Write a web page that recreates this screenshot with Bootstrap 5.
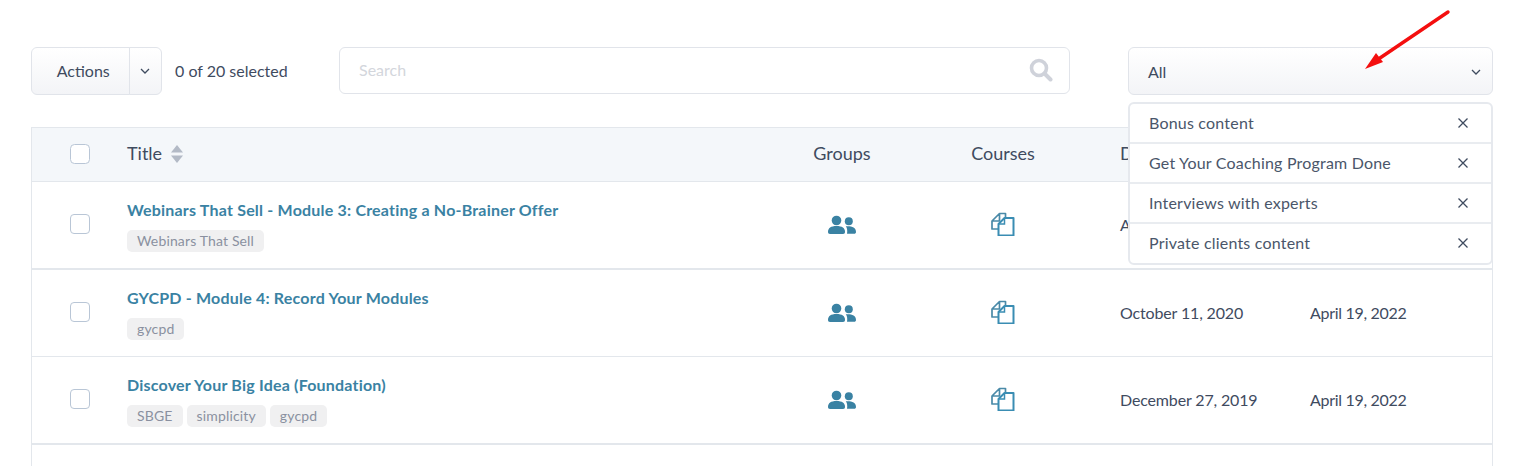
<!DOCTYPE html>
<html lang="en">
<head>
  <meta charset="UTF-8">
  <meta name="viewport" content="width=device-width, initial-scale=1">
  <title>Content list</title>
  <link href="https://cdn.jsdelivr.net/npm/bootstrap@5.3.0/dist/css/bootstrap.min.css" rel="stylesheet">
  <style>
    html, body { height: 466px; overflow: hidden; }
    body {
      font-family: "Lato", "Liberation Sans", sans-serif;
      font-size: 16px;
      color: #3f4b5f;
      background: #fff;
    }
    .page-wrap { position: relative; padding: 47px 35px 0 31px; }
    .top-bar { height: 48px; margin-bottom: 32px; }

    .actions-group { width: 131px; height: 48px; }
    .grad-btn {
      background: linear-gradient(#fff, #f3f4f7);
      border: 1px solid #e1e4ea;
      color: #3f4b5f;
      font-size: 16px;
    }
    .grad-btn:hover { background: linear-gradient(#fff, #f3f4f7); border-color: #e1e4ea; color: #3f4b5f; }
    .actions-main { width: 98px; padding: 0 0 0 6px; flex: none; }
    .actions-caret { width: 33px; padding: 0; flex: none; }
    .sel-count { margin-left: 13px; width: 164px; }

    .search-box { width: 731px; height: 47px; position: relative; flex: none; align-self: flex-start; }
    .search-input { height: 47px; border: 1px solid #e1e4ea; border-radius: 6px; padding: 0 60px 3px 19px; font-size: 16px; }
    .search-input::placeholder { color: #d3d6dc; }
    .search-icon { position: absolute; right: 17px; top: 11px; }

    .filter-select {
      width: 365px; height: 48px; margin-left: 58px; flex: none;
      padding: 2px 11px 0 19px;
      border-radius: 6px;
    }

    .item-table { width: 1462px; table-layout: fixed; margin: 0; border-collapse: separate; border-spacing: 0; border-right: 1px solid #e3e7ec; border-left: 1px solid #e3e7ec; }
    .item-table th {
      background: #f4f7fa; height: 55px; font-weight: 400; font-size: 18px; vertical-align: middle; padding: 0 0 2px;
      color: #3f4b5f; border-top: 1px solid #e3e7ec; border-bottom: 1px solid #e3e7ec;
    }
    .item-table td { height: 87px; padding: 0; vertical-align: middle; color: #3f4b5f; border-bottom: 1px solid #e3e7ec; }
    .item-table tr.thick-line td { height: 88px; border-bottom-width: 2px; }
    .item-table tr.empty-row td { height: 40px; border: 0; }
    .item-table td.title-cell { padding-top: 2px; }
    .item-table td.icon-cell { padding-bottom: 4px; }
    .item-table td.check-cell { padding-bottom: 3px; }
    .col-check { width: 95px; }
    .col-title { width: 635px; }
    .col-groups { width: 160px; }
    .col-courses { width: 162px; }
    .col-created { width: 226px; padding-left: 36px !important; letter-spacing: -.15px; }
    .updated-cell { letter-spacing: -.3px; }
    .item-check { width: 20px; height: 20px; margin: 0 0 0 38px; border: 1px solid #b9c6d6; border-radius: 5px; float: none; display: block; }
    .item-link { color: #3a82a3; font-weight: 700; letter-spacing: .2px; text-decoration: none; display: block; line-height: 20px; margin-bottom: 10px; }
    .tag-pill {
      background: #f0f0f1; color: #8a90a0; font-size: 14px; font-weight: 400; line-height: 22px; letter-spacing: .15px;
      padding: 0 10px; border-radius: 5px; height: 22px;
    }
    .sort-icon { margin-left: 3px; vertical-align: -3px; }

    .chosen-list {
      position: absolute; left: 1128px; top: 102px; width: 365px;
      border: 2px solid #e6e9ee; border-radius: 6px; background: #fff; z-index: 5;
    }
    .chosen-list .list-group-item {
      height: 40px; padding: 0 22px 0 19px; border: 0; border-bottom: 2px solid #e9ecf0; border-radius: 0;
      color: #4a566a; font-size: 16px; letter-spacing: .2px; background: transparent;
    }
    .chosen-list .list-group-item:last-child { border-bottom: 0; height: 39px; padding-bottom: 1px; }
    .red-arrow { position: absolute; left: 1360px; top: 6px; z-index: 6; }
  </style>
</head>
<body>
  <div class="page-wrap">
    <div class="top-bar d-flex align-items-center">
      <div class="btn-group actions-group">
        <button type="button" class="btn grad-btn actions-main">Actions</button>
        <button type="button" class="btn grad-btn actions-caret d-flex align-items-center justify-content-center" aria-label="Open actions">
          <svg width="10" height="6" viewBox="0 0 10 6"><path d="M1 1l4 4 4-4" fill="none" stroke="#3f4b5f" stroke-width="1.3"/></svg>
        </button>
      </div>
      <span class="sel-count">0 of 20 selected</span>
      <div class="search-box">
        <input type="text" class="form-control search-input" placeholder="Search">
        <svg class="search-icon" width="24" height="24" viewBox="0 0 24 24"><circle cx="10" cy="10" r="7.5" fill="none" stroke="#cfd2da" stroke-width="3.6"/><path d="M15.5 15.5l6 6" stroke="#cfd2da" stroke-width="4" stroke-linecap="round"/></svg>
      </div>
      <button type="button" class="btn grad-btn filter-select d-flex align-items-center justify-content-between">
        <span>All</span>
        <svg width="10" height="6" viewBox="0 0 10 6"><path d="M1 1l4 4 4-4" fill="none" stroke="#3f4b5f" stroke-width="1.3"/></svg>
      </button>
    </div>

    <table class="table item-table">
      <thead>
        <tr>
          <th class="col-check"><input class="form-check-input item-check" type="checkbox" aria-label="Select all"></th>
          <th class="col-title">Title
            <svg class="sort-icon" width="14" height="18" viewBox="0 0 14 18"><path d="M7 0l6 7.500H1z" fill="#b3bac6"/><path d="M7 18l6-7.500H1z" fill="#b3bac6"/></svg>
          </th>
          <th class="col-groups text-center">Groups</th>
          <th class="col-courses text-center">Courses</th>
          <th class="col-created">D</th>
          <th></th>
        </tr>
      </thead>
      <tbody>
        <tr class="thick-line">
          <td class="check-cell"><input class="form-check-input item-check" type="checkbox" aria-label="Select row"></td>
          <td class="title-cell">
            <a href="#" class="item-link">Webinars That Sell - Module 3: Creating a No-Brainer Offer</a>
            <div class="d-flex gap-1"><span class="badge tag-pill">Webinars That Sell</span></div>
          </td>
          <td class="text-center icon-cell"><svg width="30" height="20" viewBox="0 0 30 20"><use href="#ico-people"/></svg></td>
          <td class="text-center icon-cell"><svg width="24" height="24" viewBox="0 0 24 24"><use href="#ico-docs"/></svg></td>
          <td class="col-created">A</td>
          <td></td>
        </tr>
        <tr>
          <td class="check-cell"><input class="form-check-input item-check" type="checkbox" aria-label="Select row"></td>
          <td class="title-cell">
            <a href="#" class="item-link">GYCPD - Module 4: Record Your Modules</a>
            <div class="d-flex gap-1"><span class="badge tag-pill">gycpd</span></div>
          </td>
          <td class="text-center icon-cell"><svg width="30" height="20" viewBox="0 0 30 20"><use href="#ico-people"/></svg></td>
          <td class="text-center icon-cell"><svg width="24" height="24" viewBox="0 0 24 24"><use href="#ico-docs"/></svg></td>
          <td class="col-created">October 11, 2020</td>
          <td class="updated-cell">April 19, 2022</td>
        </tr>
        <tr class="thick-line">
          <td class="check-cell"><input class="form-check-input item-check" type="checkbox" aria-label="Select row"></td>
          <td class="title-cell">
            <a href="#" class="item-link">Discover Your Big Idea (Foundation)</a>
            <div class="d-flex gap-1"><span class="badge tag-pill">SBGE</span><span class="badge tag-pill">simplicity</span><span class="badge tag-pill">gycpd</span></div>
          </td>
          <td class="text-center icon-cell"><svg width="30" height="20" viewBox="0 0 30 20"><use href="#ico-people"/></svg></td>
          <td class="text-center icon-cell"><svg width="24" height="24" viewBox="0 0 24 24"><use href="#ico-docs"/></svg></td>
          <td class="col-created">December 27, 2019</td>
          <td class="updated-cell">April 19, 2022</td>
        </tr>
        <tr class="empty-row"><td colspan="6"></td></tr>
      </tbody>
    </table>

    <ul class="list-group chosen-list">
      <li class="list-group-item d-flex align-items-center justify-content-between">Bonus content<svg width="12" height="12" viewBox="0 0 12 12"><use href="#ico-x"/></svg></li>
      <li class="list-group-item d-flex align-items-center justify-content-between">Get Your Coaching Program Done<svg width="12" height="12" viewBox="0 0 12 12"><use href="#ico-x"/></svg></li>
      <li class="list-group-item d-flex align-items-center justify-content-between">Interviews with experts<svg width="12" height="12" viewBox="0 0 12 12"><use href="#ico-x"/></svg></li>
      <li class="list-group-item d-flex align-items-center justify-content-between">Private clients content<svg width="12" height="12" viewBox="0 0 12 12"><use href="#ico-x"/></svg></li>
    </ul>

    <svg class="red-arrow" width="96" height="68" viewBox="0 0 96 68">
      <path d="M88 6L20 52" stroke="#f40f0f" stroke-width="3.400" stroke-linecap="round" fill="none"/>
      <path d="M5 63L16 47 23 56z" fill="#f40f0f"/>
    </svg>
  </div>

  <svg width="0" height="0" class="d-block">
    <defs>
      <symbol id="ico-people" viewBox="0 0 30 20">
        <circle cx="9.500" cy="5.500" r="4.800" fill="#3a82a3"/>
        <circle cx="21.800" cy="6.200" r="4" fill="#3a82a3"/>
        <path d="M1 17c0-4 2.800-6 8.500-6s8.500 2 8.500 6c0 1.300-.7 2-2 2H3c-1.300 0-2-.7-2-2z" fill="#3a82a3"/>
        <path d="M18.800 11.300c5.200-.5 10.200.7 10.200 5.700 0 1.200-.7 1.800-1.800 1.800h-7.200c.5-2.500.3-5.700-1.200-7.500z" fill="#3a82a3"/>
      </symbol>
      <symbol id="ico-docs" viewBox="0 0 24 24">
        <path d="M14.500 6V1.500h-6L1 9v8h6.500M8.500 1.500V9H1" fill="none" stroke="#4a8aa8" stroke-width="1.700" stroke-linejoin="round"/>
        <path d="M13.500 6h9v17.500h-15V12z" fill="#fff" stroke="#3a8db3" stroke-width="2" stroke-linejoin="round"/>
        <path d="M13.500 6v6h-6" fill="none" stroke="#3a8db3" stroke-width="1.500"/>
      </symbol>
      <symbol id="ico-x" viewBox="0 0 12 12">
        <path d="M1.500 1.500l9 9M10.500 1.500l-9 9" stroke="#3f4b5f" stroke-width="1.300" fill="none"/>
      </symbol>
    </defs>
  </svg>

  <script src="https://cdn.jsdelivr.net/npm/bootstrap@5.3.0/dist/js/bootstrap.bundle.min.js"></script>
</body>
</html>
